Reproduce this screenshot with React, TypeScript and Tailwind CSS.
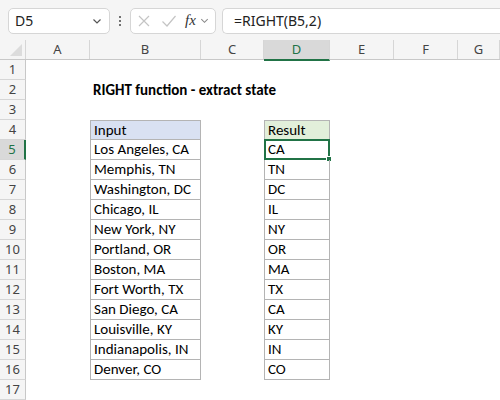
import React from "react";

const cols = [
  { key: "A", w: "w-[64px]" },
  { key: "B", w: "w-[111px]" },
  { key: "C", w: "w-[63px]" },
  { key: "D", w: "w-[66px]" },
  { key: "E", w: "w-[64px]" },
  { key: "F", w: "w-[64px]" },
  { key: "G", w: "flex-1" },
];

const data = [
  ["Los Angeles, CA", "CA"],
  ["Memphis, TN", "TN"],
  ["Washington, DC", "DC"],
  ["Chicago, IL", "IL"],
  ["New York, NY", "NY"],
  ["Portland, OR", "OR"],
  ["Boston, MA", "MA"],
  ["Fort Worth, TX", "TX"],
  ["San Diego, CA", "CA"],
  ["Louisville, KY", "KY"],
  ["Indianapolis, IN", "IN"],
  ["Denver, CO", "CO"],
];

const cellFont = { fontFamily: "Carlito, Calibri, 'Open Sans', sans-serif" };

function Cell({ row, col }: { row: number; col: string }) {
  const base = "h-full flex items-center px-[3px] text-[15px] text-black whitespace-nowrap";
  if (row === 2 && col === "B") {
    return <div className={`${base} font-bold overflow-visible`}>RIGHT function - extract state</div>;
  }
  if (row === 4 && col === "B") {
    return <div className={`${base} bg-[#d9e1f2] border border-[#b4b4b4]`}>Input</div>;
  }
  if (row === 4 && col === "D") {
    return <div className={`${base} bg-[#e2efda] border border-[#b4b4b4]`}>Result</div>;
  }
  if (row >= 5 && row <= 16 && col === "B") {
    return <div className={`${base} border-x border-b border-[#b4b4b4]`}>{data[row - 5][0]}</div>;
  }
  if (row >= 5 && row <= 16 && col === "D") {
    return (
      <div className={`${base} relative border-x border-b border-[#b4b4b4]`}>
        {data[row - 5][1]}
        {row === 5 && (
          <>
            <div className="absolute -left-px -top-px -right-px -bottom-px border-2 border-[#217346]" />
            <div className="absolute -right-[3px] -bottom-[3px] w-[6px] h-[6px] bg-[#217346] border border-white" />
          </>
        )}
      </div>
    );
  }
  return <div className="h-full" />;
}

export default function App() {
  const rows = Array.from({ length: 17 }, (_, i) => i + 1);
  return (
    <div className="w-[500px] h-[400px] overflow-hidden bg-white" style={{ fontFamily: "'Noto Sans', sans-serif" }}>
      {/* formula bar */}
      <div className="h-[40px] bg-[#f5f5f5] flex items-center gap-[6px] pl-[8px] pt-px">
        <div className="w-[102px] h-[26px] bg-white border border-[#d6d6d6] rounded-[5px] flex items-center justify-between pl-[6px] pr-[6px]">
          <span className="text-[14px] text-[#222]">D5</span>
          <svg width="12" height="12" viewBox="0 0 12 12" fill="none" stroke="#555" strokeWidth="1.2">
            <path d="M2.5 4.5 L6 8 L9.5 4.5" />
          </svg>
        </div>
        <div className="w-[8px] flex flex-col items-center gap-[2px]">
          <span className="w-[2px] h-[2px] bg-[#444] rounded-full" />
          <span className="w-[2px] h-[2px] bg-[#444] rounded-full" />
          <span className="w-[2px] h-[2px] bg-[#444] rounded-full" />
        </div>
        <div className="w-[86px] h-[26px] bg-white border border-[#d6d6d6] rounded-[5px] flex items-center pl-[6px]">
          <svg width="14" height="14" viewBox="0 0 14 14" fill="none" stroke="#c4c4c4" strokeWidth="1.2">
            <path d="M2 2 L12 12 M12 2 L2 12" />
          </svg>
          <svg className="ml-[10px]" width="16" height="14" viewBox="0 0 16 14" fill="none" stroke="#c4c4c4" strokeWidth="1.2">
            <path d="M1.5 7.5 L6 12 L14.5 2" />
          </svg>
          <span className="ml-[8px] text-[15px] italic text-[#333] leading-none" style={{ fontFamily: "'Liberation Serif', serif" }}>
            fx
          </span>
          <svg className="ml-[3px]" width="11" height="11" viewBox="0 0 12 12" fill="none" stroke="#888" strokeWidth="1.1">
            <path d="M2.5 4.5 L6 8 L9.5 4.5" />
          </svg>
        </div>
        <div className="flex-1 h-[26px] bg-white border border-r-0 border-[#d6d6d6] rounded-l-[5px] flex items-center pl-[11px]">
          <span className="text-[14px] text-[#222]">=RIGHT(B5,2)</span>
        </div>
      </div>

      {/* column headers */}
      <div className="flex h-[20px] bg-[#f5f5f5] border-b border-[#c8c8c8] text-[13px] text-[#444]">
        <div className="w-[26px] border-r border-[#d6d6d6] relative">
          <svg className="absolute right-[3px] bottom-[3px]" width="12" height="12" viewBox="0 0 12 12">
            <path d="M12 0 L12 12 L0 12 Z" fill="#dcdcdc" />
          </svg>
        </div>
        {cols.map((c) =>
          c.key === "D" ? (
            <div key={c.key} className={`${c.w} flex items-center justify-center bg-[#d9d9d9] border-r border-[#d6d6d6] border-b-2 border-b-[#217346] text-[#217346] h-[21px]`}>
              {c.key}
            </div>
          ) : (
            <div key={c.key} className={`${c.w} flex items-center justify-center border-r border-[#d6d6d6]`}>
              {c.key}
            </div>
          )
        )}
      </div>

      {/* rows */}
      {rows.map((r) => (
        <div key={r} className="flex h-[20px]" style={cellFont}>
          <div
            className={`w-[26px] h-full flex items-center justify-center text-[13px] border-b border-[#d6d6d6] ${
              r === 5 ? "bg-[#d9d9d9] text-[#217346] border-r-2 border-r-[#217346]" : "bg-[#f5f5f5] text-[#444] border-r border-r-[#c8c8c8]"
            }`}
            style={{ fontFamily: "'Noto Sans', sans-serif" }}
          >
            {r}
          </div>
          {cols.map((c) => (
            <div key={c.key} className={`${c.w} h-full`}>
              <Cell row={r} col={c.key} />
            </div>
          ))}
        </div>
      ))}
    </div>
  );
}
